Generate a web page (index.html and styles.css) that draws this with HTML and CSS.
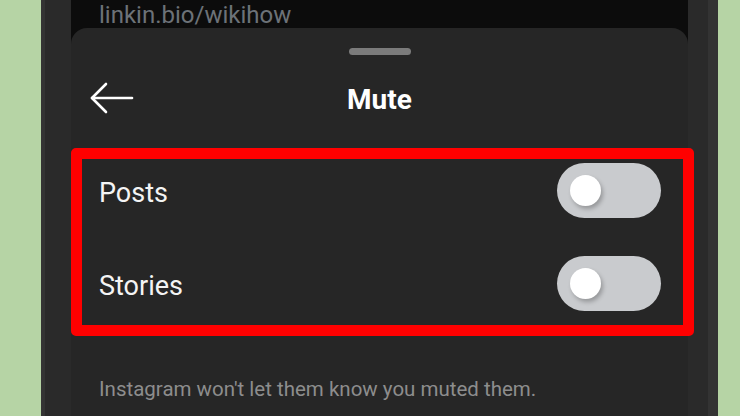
FILE: index.html
```html
<!DOCTYPE html>
<html lang="en">
<head>
    <meta charset="UTF-8">
    <meta name="viewport" content="width=device-width, initial-scale=1.0">
    <title>Mute</title>
    <link rel="stylesheet" href="styles.css">
</head>
<body>
    <div class="phone">
        <div class="screen">
            <div class="topbar">
                <span class="link">linkin.bio/wikihow</span>
            </div>

            <div class="sheet">
                <div class="handle"></div>

                <div class="header">
                    <button class="back" aria-label="Back">
                        <svg width="44" height="34" viewBox="0 0 44 34" fill="none" stroke="#fff" stroke-width="2.6" stroke-linecap="round" stroke-linejoin="round">
                            <path d="M2 16 H42"/>
                            <path d="M16 2 L2 16 L16 30"/>
                        </svg>
                    </button>
                    <h1>Mute</h1>
                    <div></div>
                </div>

                <div class="highlight">
                    <div class="row">
                        <span class="label">Posts</span>
                        <div class="toggle"><div class="knob"></div></div>
                    </div>
                    <div class="row">
                        <span class="label">Stories</span>
                        <div class="toggle"><div class="knob"></div></div>
                    </div>
                </div>

                <p class="note">Instagram won't let them know you muted them.</p>
            </div>
        </div>
    </div>
</body>
</html>
```

FILE: styles.css
```css
body {
    margin: 0;
    height: 416px;
    overflow: hidden;
    background-color: #b6d4a5;
    font-family: Roboto, "Liberation Sans", sans-serif;
    padding-left: 41px;
}
.phone {
    box-sizing: border-box;
    width: 677px;
    height: 416px;
    background-color: #2a2a2a;
    border-left: 4px solid #343434;
    border-right: 10px solid #333;
    padding: 0 20px 0 26px;
}
.screen {
    height: 100%;
    background-color: #0c0c0c;
    display: flex;
    flex-direction: column;
}
.topbar {
    height: 28px;
    padding-left: 28px;
}
.link {
    display: block;
    font-size: 24px;
    line-height: 30px;
    color: #6c7278;
}
.sheet {
    flex: 1;
    background-color: #262626;
    border-radius: 16px 16px 0 0;
    display: flex;
    flex-direction: column;
}
.handle {
    align-self: center;
    width: 62px;
    height: 7px;
    margin-top: 20px;
    border-radius: 4px;
    background-color: #7b7b7b;
}
.header {
    display: grid;
    grid-template-columns: 1fr auto 1fr;
    align-items: center;
    height: 56px;
    margin-top: 16px;
    padding: 0 19px;
}
.back {
    justify-self: start;
    background: none;
    border: none;
    padding: 0;
    display: flex;
}
.header h1 {
    margin: 0;
    font-size: 28px;
    font-weight: 700;
    color: #fff;
}
.highlight {
    margin-top: 21px;
    margin-right: -6px;
    border: 11px solid #ff0000;
    border-radius: 5px;
    padding: 4px 22px 14px 17px;
    display: flex;
    flex-direction: column;
    gap: 38px;
}
.row {
    display: flex;
    justify-content: space-between;
    align-items: center;
    font-size: 27px;
    color: #f4f4f4;
}
.label {
    padding-top: 4px;
}
.toggle {
    box-sizing: border-box;
    width: 104px;
    height: 55px;
    border-radius: 28px;
    background-color: #c9cbce;
    padding: 12px 13px;
}
.knob {
    width: 31px;
    height: 31px;
    border-radius: 50%;
    background-color: #fff;
    box-shadow: 2px 3px 4px rgba(0, 0, 0, 0.25);
}
.note {
    margin: 41px 0 0 28px;
    font-size: 20.5px;
    line-height: 24px;
    color: #8d8d8d;
}
```
